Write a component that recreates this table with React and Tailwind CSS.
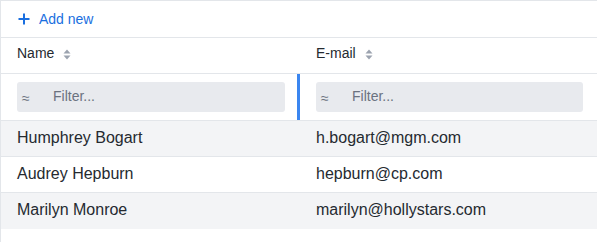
import React from "react";

function SortIcon() {
  return (
    <svg width="8" height="11" viewBox="0 0 8 11" className="ml-[9px] mt-[2px]">
      <path d="M4 0.5 L7.5 4.5 L0.5 4.5 Z" fill="#9ca3af" />
      <path d="M4 10.5 L7.5 6.5 L0.5 6.5 Z" fill="#9ca3af" />
    </svg>
  );
}

function Filter() {
  return (
    <div className="flex h-[30px] flex-1 items-center rounded-[3px] bg-[#e8eaee]">
      <span className="ml-[5px] mt-[2px] w-[31px] text-[14px] leading-none text-[#6b7280]">≈</span>
      <span className="text-[14px] text-[#6b7280]">Filter...</span>
    </div>
  );
}

const rows = [
  ["Humphrey Bogart", "h.bogart@mgm.com"],
  ["Audrey Hepburn", "hepburn@cp.com"],
  ["Marilyn Monroe", "marilyn@hollystars.com"],
];

export default function App() {
  return (
    <div
      className="h-[242px] w-[597px] overflow-hidden border-l border-t border-[#e3e6ea] bg-white text-[#252a30]"
      style={{ fontFamily: '"Liberation Sans", Arial, sans-serif' }}
    >
      <div className="flex h-[37px] items-center border-b border-[#e3e6ea] pl-[17px]">
        <svg width="12" height="12" viewBox="0 0 12 12">
          <path d="M6 0.5 V11.5 M0.5 6 H11.5" stroke="#1a6fe0" strokeWidth="2" />
        </svg>
        <span className="ml-[9px] text-[14px] text-[#1a6fe0]">Add new</span>
      </div>
      <div className="flex h-[36px] border-b border-[#e3e6ea] text-[14px]">
        <div className="flex w-[299px] items-center pb-[4px] pl-[16px]">
          Name
          <SortIcon />
        </div>
        <div className="flex flex-1 items-center pb-[4px] pl-[16px]">
          E-mail
          <SortIcon />
        </div>
      </div>
      <div className="flex h-[47px] border-b border-[#e3e6ea]">
        <div className="flex w-[296px] items-center pb-[1px] pl-[16px] pr-[12px]">
          <Filter />
        </div>
        <div className="w-[3px] bg-[#3b86f0]" />
        <div className="flex flex-1 items-center pb-[1px] pl-[16px] pr-[14px]">
          <Filter />
        </div>
      </div>
      {rows.map(([n, e], i) => (
        <div
          key={n}
          className={`flex h-[36px] items-center pb-[2px] text-[16px] ${
            i % 2 === 0 ? "bg-[#f3f4f6]" : "bg-white"
          } ${i < rows.length - 1 ? "border-b border-[#e3e6ea]" : ""}`}
        >
          <div className="w-[299px] pl-[16px]">{n}</div>
          <div className="flex-1 pl-[16px]">{e}</div>
        </div>
      ))}
    </div>
  );
}
